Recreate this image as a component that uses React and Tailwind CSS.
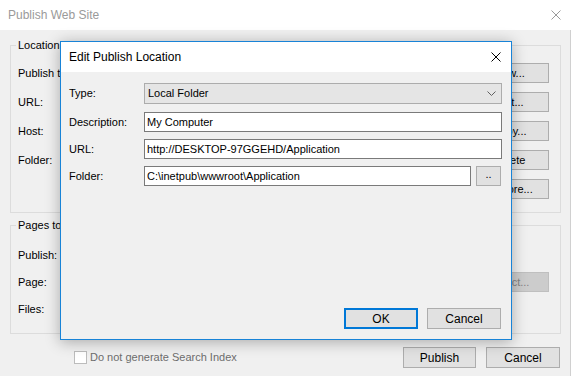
import React from "react";

const CloseIcon = ({ className = "" }) => (
  <svg width="10" height="10" viewBox="0 0 10 10" className={className}>
    <path d="M0.5 0.5 L9.5 9.5 M9.5 0.5 L0.5 9.5" stroke="currentColor" strokeWidth="1" fill="none" />
  </svg>
);

const Btn = ({ children, className = "", disabled = false }) => (
  <button
    type="button"
    disabled={disabled}
    className={`flex items-center justify-center border text-[11px] leading-none ${
      disabled ? "border-[#bfbfbf] bg-[#cccccc] text-[#838383]" : "border-[#adadad] bg-[#e1e1e1] text-black"
    } ${className}`}
  >
    {children}
  </button>
);

const locationRows = [
  ["Publish to:", "New..."],
  ["URL:", "Edit..."],
  ["Host:", "Copy..."],
  ["Folder:", "Delete"],
  ["", "Explore..."],
];

const EditPublishLocation = () => (
  <div className="absolute left-[60px] top-[41px] flex h-[299px] w-[452px] flex-col border border-[#1883d7] bg-[#f0f0f0] shadow-[0_2px_14px_rgba(0,0,0,0.3)]">
    <div className="flex h-[30px] items-center justify-between bg-white pl-[8px] pr-[10px]">
      <span className="text-[12px]">Edit Publish Location</span>
      <CloseIcon className="text-black" />
    </div>
    <div className="flex flex-col pl-[8px] pr-[9px] pt-[11px]">
      <div className="mb-[8px] flex h-[21px] items-center">
        <span className="w-[75px]">Type:</span>
        <div className="flex h-full flex-1 items-center justify-between border border-[#acacac] bg-[#e5e5e5] pl-[3px] pr-[5px]">
          <span>Local Folder</span>
          <svg width="9" height="5" viewBox="0 0 9 5">
            <path d="M0.5 0.5 L4.5 4.5 L8.5 0.5" stroke="#606060" strokeWidth="1" fill="none" />
          </svg>
        </div>
      </div>
      <div className="flex flex-col gap-[7px]">
        <div className="flex h-[20px] items-center">
          <span className="w-[75px]">Description:</span>
          <input
            readOnly
            defaultValue="My Computer"
            className="h-full flex-1 border border-[#7a7a7a] bg-white pl-[2px] text-[11px] outline-none"
          />
        </div>
        <div className="flex h-[20px] items-center">
          <span className="w-[75px]">URL:</span>
          <input
            readOnly
            defaultValue="http://DESKTOP-97GGEHD/Application"
            className="h-full flex-1 border border-[#7a7a7a] bg-white pl-[2px] text-[11px] outline-none"
          />
        </div>
        <div className="flex h-[20px] items-center">
          <span className="w-[75px]">Folder:</span>
          <input
            readOnly
            defaultValue="C:\inetpub\wwwroot\Application"
            className="h-full flex-1 border border-[#7a7a7a] bg-white pl-[2px] text-[11px] outline-none"
          />
          <Btn className="ml-[5px] mr-[1px] h-[20px] w-[25px] pb-[3px] text-[10px] text-[#777]">..</Btn>
        </div>
      </div>
    </div>
    <div className="mt-auto flex justify-end gap-[9px] pb-[10px] pr-[10px]">
      <button type="button" className="h-[21px] w-[74px] border-2 border-[#0078d7] bg-[#e1e1e1] text-[12px] leading-none">
        OK
      </button>
      <Btn className="h-[21px] w-[74px] text-[12px]">Cancel</Btn>
    </div>
  </div>
);

export default function App() {
  return (
    <div className="relative h-[376px] w-[573px] overflow-hidden bg-white font-['Liberation_Sans',Arial,sans-serif] text-[11px] text-black">
      <div className="flex h-[30px] items-center justify-between pl-[8px] pr-[12px]">
        <span className="text-[12px] text-[#9a9a9a]">Publish Web Site</span>
        <CloseIcon className="text-[#9a9a9a]" />
      </div>
      <div className="h-[346px] w-[571px] border-r border-[#d0d0d0] bg-[#f0f0f0] pl-[10px] pr-[9px] pt-[8px]">
        <fieldset className="border border-[#dcdcdc] pb-[13px] pl-[5px] pr-[11px]">
          <legend className="px-[2px] leading-[14px]">Location</legend>
          <div className="mt-[11px] flex flex-col gap-[9px] pl-[2px]">
            {locationRows.map(([label, btn]) => (
              <div key={btn} className="flex h-[20px] items-center justify-between">
                <span>{label}</span>
                <Btn className="h-[20px] w-[79px]">{btn}</Btn>
              </div>
            ))}
          </div>
        </fieldset>
        <fieldset className="mt-[5px] border border-[#dcdcdc] pb-[14px] pl-[5px] pr-[11px]">
          <legend className="px-[2px] leading-[14px]">Pages to publish</legend>
          <div className="mt-[13px] flex flex-col gap-[7px] pl-[2px]">
            <div className="flex h-[20px] items-center">
              <span>Publish:</span>
            </div>
            <div className="flex h-[20px] items-center justify-between">
              <span>Page:</span>
              <Btn disabled className="h-[20px] w-[79px]">Select...</Btn>
            </div>
            <div className="flex h-[20px] items-center">
              <span>Files:</span>
            </div>
          </div>
        </fieldset>
        <div className="mt-[13px] flex items-center">
          <span className="ml-[64px] h-[13px] w-[13px] border border-[#bcbcbc] bg-white" />
          <span className="ml-[3px] text-[#6d6d6d]">Do not generate Search Index</span>
          <div className="ml-auto mr-[1px] flex gap-[10px]">
            <Btn className="h-[21px] w-[73px] text-[12px]">Publish</Btn>
            <Btn className="h-[21px] w-[74px] text-[12px]">Cancel</Btn>
          </div>
        </div>
      </div>
      <EditPublishLocation />
    </div>
  );
}
